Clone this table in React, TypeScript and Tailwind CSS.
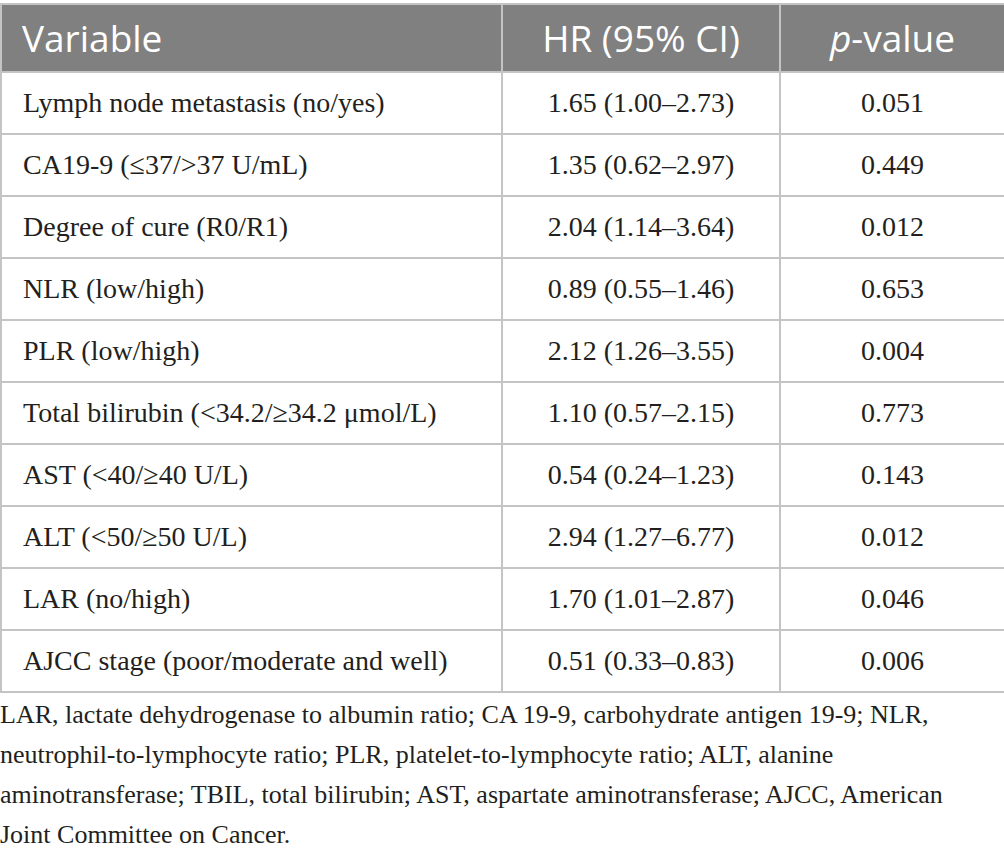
const rows = [
  ["Lymph node metastasis (no/yes)", "1.65 (1.00–2.73)", "0.051"],
  ["CA19-9 (≤37/>37 U/mL)", "1.35 (0.62–2.97)", "0.449"],
  ["Degree of cure (R0/R1)", "2.04 (1.14–3.64)", "0.012"],
  ["NLR (low/high)", "0.89 (0.55–1.46)", "0.653"],
  ["PLR (low/high)", "2.12 (1.26–3.55)", "0.004"],
  ["Total bilirubin (<34.2/≥34.2 μmol/L)", "1.10 (0.57–2.15)", "0.773"],
  ["AST (<40/≥40 U/L)", "0.54 (0.24–1.23)", "0.143"],
  ["ALT (<50/≥50 U/L)", "2.94 (1.27–6.77)", "0.012"],
  ["LAR (no/high)", "1.70 (1.01–2.87)", "0.046"],
  ["AJCC stage (poor/moderate and well)", "0.51 (0.33–0.83)", "0.006"],
];

const notes = [
  "LAR, lactate dehydrogenase to albumin ratio; CA 19-9, carbohydrate antigen 19-9; NLR,",
  "neutrophil-to-lymphocyte ratio; PLR, platelet-to-lymphocyte ratio; ALT, alanine",
  "aminotransferase; TBIL, total bilirubin; AST, aspartate aminotransferase; AJCC, American",
  "Joint Committee on Cancer.",
];

export default function App() {
  return (
    <div className="w-[1004px] bg-white pt-[3px]">
      <table className="w-[1004px] table-fixed border-collapse font-['Liberation_Serif',serif] text-[28px] text-[#231f20]">
        <colgroup>
          <col className="w-[501px]" />
          <col className="w-[278px]" />
          <col className="w-[225px]" />
        </colgroup>
        <thead>
          {/* Header */}
          <tr className="h-[68px] bg-[#808080] font-['Open_Sans',sans-serif] text-[37px] text-white">
            <th className="border-2 border-[#c4c4c4] pl-[20px] text-left font-normal">Variable</th>
            <th className="border-2 border-[#c4c4c4] text-center font-normal">HR (95% CI)</th>
            <th className="border-2 border-[#c4c4c4] text-center font-normal">
              <i>p</i>-value
            </th>
          </tr>
        </thead>
        <tbody>
          {rows.map((r) => (
            <tr key={r[0]} className="h-[62px]">
              <td className="border-2 border-[#c4c4c4] pl-[21px]">{r[0]}</td>
              <td className="border-2 border-[#c4c4c4] text-center">{r[1]}</td>
              <td className="border-2 border-[#c4c4c4] text-center">{r[2]}</td>
            </tr>
          ))}
        </tbody>
      </table>

      {/* Footnote */}
      <div className="pt-[2px] font-['Liberation_Serif',serif] text-[26px] leading-[40px] text-[#231f20]">
        {notes.map((line) => (
          <div key={line} className="whitespace-nowrap">
            {line}
          </div>
        ))}
      </div>
    </div>
  );
}
